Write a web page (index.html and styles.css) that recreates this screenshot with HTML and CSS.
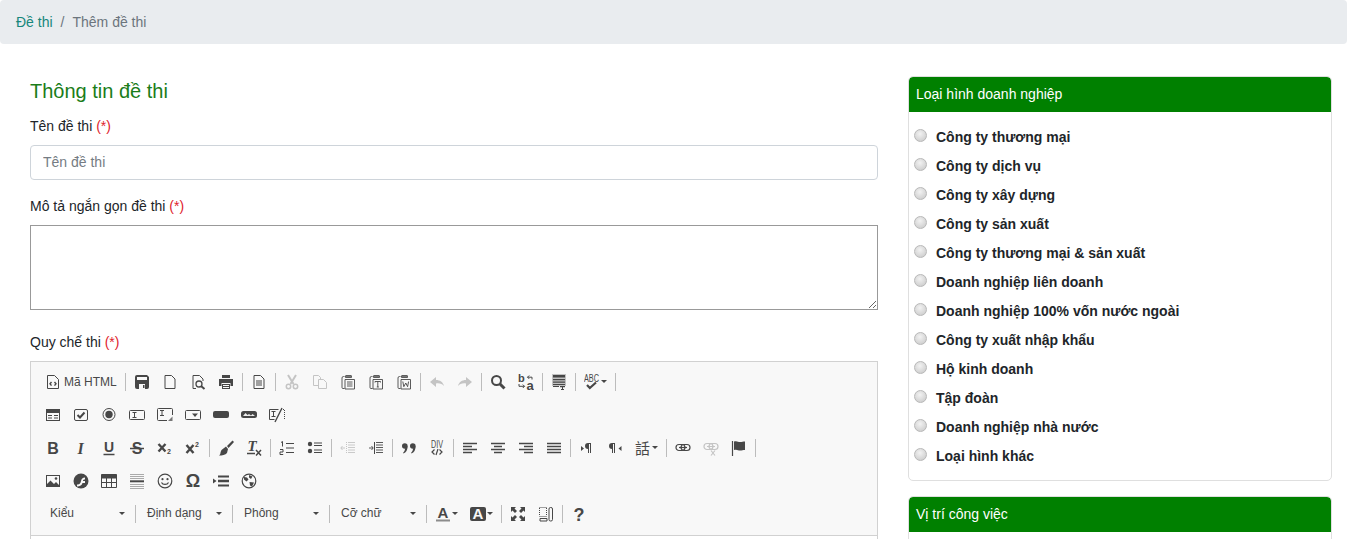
FILE: index.html
```html
<!DOCTYPE html>
<html lang="vi">
<head>
<meta charset="utf-8">
<title>Thêm đề thi</title>
<link rel="stylesheet" href="styles.css">
</head>
<body>
<svg class="sprite" aria-hidden="true">
  <symbol id="source" viewBox="0 0 16 16"><path d="M2.500 1.500h7l4 4v9h-11z" fill="none" stroke="currentColor"/><path d="M6.500 8L5 9.800l1.500 1.800M9.500 8L11 9.800l-1.500 1.800" fill="none" stroke="currentColor" stroke-width="1.400"/></symbol>
  <symbol id="save" viewBox="0 0 16 16"><path d="M1 3a2 2 0 012-2h10l2 2v10a2 2 0 01-2 2H3a2 2 0 01-2-2z" fill="currentColor"/><path d="M3 3h10v3H3zM5 10h6v5H5z" fill="#f8f8f8"/><path d="M9 11h1.500v3H9z" fill="currentColor"/></symbol>
  <symbol id="new" viewBox="0 0 16 16"><path d="M3 1.500h6.500l3.500 3.500v9.500H3z" fill="none" stroke="currentColor"/></symbol>
  <symbol id="preview" viewBox="0 0 16 16"><path d="M6 14.500H3v-13h6.500L13 5v2" fill="none" stroke="currentColor"/><circle cx="9" cy="10" r="3" fill="none" stroke="currentColor" stroke-width="1.300"/><path d="M11 12l3.500 3" stroke="currentColor" stroke-width="2"/></symbol>
  <symbol id="print" viewBox="0 0 16 16"><path d="M4 1h8v3H4z" fill="currentColor"/><path d="M1 5h14v7h-2.500V9h-9v3H1z" fill="currentColor"/><path d="M4 10h8v5H4z" fill="currentColor"/><path d="M5 11h6v1H5zM5 13h6v1H5z" fill="#f8f8f8"/></symbol>
  <symbol id="templates" viewBox="0 0 16 16"><path d="M3 1.500h6.500l3.500 3.500v9.500H3z" fill="none" stroke="currentColor"/><path d="M5 7h6M5 9h6M5 11h6" stroke="currentColor"/></symbol>
  <symbol id="cut" viewBox="0 0 16 16"><path d="M4 1l5.500 9M12 1L6.500 10" stroke="currentColor" stroke-width="2" fill="none"/><circle cx="4.500" cy="12.500" r="2.200" fill="none" stroke="currentColor" stroke-width="1.500"/><circle cx="11.500" cy="12.500" r="2.200" fill="none" stroke="currentColor" stroke-width="1.500"/></symbol>
  <symbol id="copy" viewBox="0 0 16 16"><path d="M6.500 11.500h-5v-10h5l2 2v2M6.500 5.500h5l3 3v6h-8z" fill="none" stroke="currentColor"/></symbol>
  <symbol id="paste" viewBox="0 0 16 16"><path d="M4.500 2.500h-1a1.500 1.500 0 00-1.500 1.500v9.500a1 1 0 001 1h1.500" fill="none" stroke="currentColor" stroke-width=".9"/><path d="M5.500 3.500V2a.5.5 0 01.5-.5h5a.5.5 0 01.5.5v1.500z" fill="#777" stroke="currentColor" stroke-width=".8"/><path d="M5 5.500h9.500v9.500H5z" fill="none" stroke="currentColor" stroke-width=".9"/><path d="M7 8h5.500M7 10h5.500M7 12h5.500" stroke="currentColor" stroke-width=".9"/></symbol>
  <symbol id="pastetext" viewBox="0 0 16 16"><path d="M4.500 2.500h-1a1.500 1.500 0 00-1.500 1.500v9.500a1 1 0 001 1h1.500" fill="none" stroke="currentColor" stroke-width=".9"/><path d="M5.500 3.500V2a.5.5 0 01.5-.5h5a.5.5 0 01.5.5v1.500z" fill="#777" stroke="currentColor" stroke-width=".8"/><path d="M5 5.500h9.500v9.500H5z" fill="none" stroke="currentColor" stroke-width=".9"/><path d="M7 8.500V7.500h5.500v1M9.800 7.500V13M8.800 13h2" fill="none" stroke="currentColor" stroke-width=".9"/></symbol>
  <symbol id="pasteword" viewBox="0 0 16 16"><path d="M4.500 2.500h-1a1.500 1.500 0 00-1.500 1.500v9.500a1 1 0 001 1h1.500" fill="none" stroke="currentColor" stroke-width=".9"/><path d="M5.500 3.500V2a.5.5 0 01.5-.5h5a.5.5 0 01.5.5v1.500z" fill="#777" stroke="currentColor" stroke-width=".8"/><path d="M5 5.500h9.500v9.500H5z" fill="none" stroke="currentColor" stroke-width=".9"/><path d="M6.800 7.500l1 5.200L9.800 9l1.800 3.700 1-5.200" fill="none" stroke="currentColor" stroke-width=".9"/></symbol>
  <symbol id="undo" viewBox="0 0 16 16"><path d="M1 8l6-5v3c4 0 7 2 8 6-2-2-4-3-8-2.500V13z" fill="currentColor"/></symbol>
  <symbol id="redo" viewBox="0 0 16 16"><path d="M15 8L9 3v3C5 6 2 8 1 12c2-2 4-3 8-2.500V13z" fill="currentColor"/></symbol>
  <symbol id="find" viewBox="0 0 16 16"><circle cx="6.500" cy="6.500" r="4.500" fill="none" stroke="currentColor" stroke-width="2"/><path d="M10 10l4.500 4.500" stroke="currentColor" stroke-width="3"/></symbol>
  <symbol id="replace" viewBox="0 0 16 16"><text x="0" y="8" class="gl gb11">b</text><text x="8.500" y="15.500" class="gl gb13">a</text><path d="M14 5.500V3.200H9.500M11.200 1.500L9.500 3.200l1.700 1.700" fill="none" stroke="currentColor"/><path d="M1 10v2.300h5.500M4.800 10.600l1.700 1.700-1.700 1.700" fill="none" stroke="currentColor"/></symbol>
  <symbol id="selectall" viewBox="0 0 16 16"><path d="M1 0h14v12H1z" fill="#c2c2c2"/><path d="M2 1h12v2.500H2zM2 5h12v1.200H2zM2 7.500h12v1.200H2zM2 10h12v1H2zM2 12h6v1H2z" fill="currentColor"/><path d="M9 12h5v1.200h-2V15h1v1h-3v-1h1v-1.800H9z" fill="currentColor"/></symbol>
  <symbol id="spell" viewBox="0 0 16 16"><text x="0" y="8" class="gl gs10" textLength="15" lengthAdjust="spacingAndGlyphs">ABC</text><path d="M3 11l2.800 3L12 8.500" fill="none" stroke="currentColor" stroke-width="2.200"/></symbol>
  <symbol id="form" viewBox="0 0 16 16"><path d="M1 2h14v12H1z" fill="currentColor"/><path d="M2 6h12v7H2z" fill="#f8f8f8"/><path d="M3 8h4v1H3zM3 10.500h4v1H3zM9 8h4v1H9zM9 10.500h4v1H9z" fill="currentColor"/></symbol>
  <symbol id="checkbox" viewBox="0 0 16 16"><rect x="1.500" y="2.500" width="13" height="11" rx="1.500" fill="none" stroke="currentColor"/><path d="M4.500 8l2.500 2.500 4.500-5" fill="none" stroke="currentColor" stroke-width="2"/></symbol>
  <symbol id="radio" viewBox="0 0 16 16"><circle cx="8" cy="7.500" r="6" fill="none" stroke="currentColor"/><circle cx="8" cy="7.500" r="3.700" fill="currentColor"/></symbol>
  <symbol id="textfield" viewBox="0 0 16 16"><rect x=".5" y="3.500" width="15" height="9" rx="1" fill="none" stroke="currentColor"/><path d="M3.500 5.500h4M5.500 5.500v5M3.500 10.500h4" fill="none" stroke="currentColor"/></symbol>
  <symbol id="textarea" viewBox="0 0 16 16"><path d="M10 13.500H1.500a1 1 0 01-1-1v-10a1 1 0 011-1h13a1 1 0 011 1V8" fill="none" stroke="currentColor"/><path d="M3 3.500h4M5 3.500v5M3 8.500h4" fill="none" stroke="currentColor"/><path d="M15.500 9.500v4.500H11z" fill="#777"/></symbol>
  <symbol id="select" viewBox="0 0 16 16"><rect x=".5" y="3.500" width="15" height="9" rx="1" fill="none" stroke="currentColor"/><path d="M7 6.500h6L10 10z" fill="currentColor"/></symbol>
  <symbol id="button" viewBox="0 0 16 16"><rect y="4" width="16" height="7" rx="2" fill="currentColor"/></symbol>
  <symbol id="imagebutton" viewBox="0 0 16 16"><rect y="4" width="16" height="7" rx="2.500" fill="currentColor"/><path d="M2 9l2.500-3 2 2 1.500-1 2 1.500 1.500-1.500L14 9z" fill="#eee"/></symbol>
  <symbol id="hiddenfield" viewBox="0 0 16 16"><path d="M.5 2.500h9M.5 2.500v10h5" fill="none" stroke="currentColor"/><path d="M2.500 4.500h4M4.500 4.500v5M2.500 9.500h4" fill="none" stroke="currentColor"/><path d="M6 15L13 1" stroke="currentColor" stroke-width="1.400"/><path d="M12 2.500h3.500M15.500 3v9" stroke="currentColor" stroke-dasharray="1 1" fill="none"/></symbol>
  <symbol id="bold" viewBox="0 0 16 16"><text x="8" y="13.500" class="gl gb16 mid">B</text></symbol>
  <symbol id="italic" viewBox="0 0 16 16"><text x="7.500" y="13.500" class="gl gi16 mid">I</text></symbol>
  <symbol id="underline" viewBox="0 0 16 16"><text x="8" y="12" class="gl gb14 mid">U</text><path d="M2.500 14.500h11" stroke="currentColor" stroke-width="1.500"/></symbol>
  <symbol id="strike" viewBox="0 0 16 16"><text x="8" y="13.500" class="gl gb16 mid">S</text><path d="M1 8.500h14" stroke="currentColor" stroke-width="1.500"/></symbol>
  <symbol id="sub" viewBox="0 0 16 16"><path d="M1.500 4l7 7.500M8.500 4l-7 7.500" stroke="currentColor" stroke-width="2.400"/><text x="10" y="14" class="gl gb7">2</text></symbol>
  <symbol id="sup" viewBox="0 0 16 16"><path d="M1.500 5l7 8M8.500 5l-7 8" stroke="currentColor" stroke-width="2.400"/><text x="10" y="7" class="gl gb7">2</text></symbol>
  <symbol id="brush" viewBox="0 0 16 16"><path d="M9 6l5.500-5.500 1.500 1.500L10.500 8z" fill="currentColor"/><path d="M8 6.500l2 2.500-1 4c-1.500 2-5 2.500-8 2.500 2-1 1-3 2.500-5.500z" fill="currentColor"/></symbol>
  <symbol id="removeformat" viewBox="0 0 16 16"><text x="1.500" y="11" class="gl gi15">T</text><path d="M1 13.500h8" stroke="currentColor" stroke-width="1.500"/><path d="M10 10l5 5.500M15 10l-5 5.500" stroke="currentColor" stroke-width="1.500"/></symbol>
  <symbol id="ol" viewBox="0 0 16 16"><path d="M7 3.500h8M7 8h8M7 12.500h8" stroke="currentColor" stroke-width="1.200"/><path d="M2 2.500l1.500-1v5M1 9.500h3v2.500H1v2.500h3.200" fill="none" stroke="currentColor"/></symbol>
  <symbol id="ul" viewBox="0 0 16 16"><circle cx="3" cy="4" r="2.200" fill="currentColor"/><circle cx="3" cy="11" r="2.200" fill="currentColor"/><path d="M7 3h8M7 5.500h8M7 10h8M7 12.500h8" stroke="currentColor" stroke-width="1.100"/></symbol>
  <symbol id="outdent" viewBox="0 0 16 16"><path d="M8 2.500h7M8 5h7M8 7.500h7M8 10h7M8 12.500h7" stroke="currentColor" stroke-width=".9"/><path d="M1 8h4M2.500 6L.8 8l1.700 2" stroke="currentColor" fill="none" stroke-width=".9"/><path d="M6.500 2v12" stroke="currentColor" stroke-dasharray="1 1"/></symbol>
  <symbol id="indent" viewBox="0 0 16 16"><path d="M8 2.500h7M8 5h7M8 7.500h7M8 10h7M8 12.500h7" stroke="currentColor" stroke-width=".9"/><path d="M1 8h4M3.500 6L5.200 8l-1.700 2" stroke="currentColor" fill="none" stroke-width=".9"/><path d="M6.500 2v12" stroke="currentColor"/></symbol>
  <symbol id="quote" viewBox="0 0 16 16"><circle cx="3.800" cy="6" r="2.800" fill="currentColor"/><path d="M6.600 6c0 4-1.500 6.500-4.100 7.500l-.4-.8C3.500 11.500 4 10 4 8.500z" fill="currentColor"/><circle cx="11.800" cy="6" r="2.800" fill="currentColor"/><path d="M14.600 6c0 4-1.500 6.500-4.100 7.500l-.4-.8c1.400-1.200 1.900-2.700 1.900-4.200z" fill="currentColor"/></symbol>
  <symbol id="div" viewBox="0 0 16 16"><text x="2" y="7.500" class="gl gs10" textLength="12" lengthAdjust="spacingAndGlyphs">DIV</text><path d="M5.500 9.500L3 12l2.500 2.500M10.500 9.500L13 12l-2.500 2.500M9 9l-2 6" fill="none" stroke="currentColor" stroke-width="1.200"/></symbol>
  <symbol id="left" viewBox="0 0 16 16"><path d="M1 3h14M1 6h9M1 9h14M1 12h9" stroke="currentColor" stroke-width="1.700" transform="translate(0 .5)"/></symbol>
  <symbol id="center" viewBox="0 0 16 16"><path d="M1 3h14M4 6h8M1 9h14M4 12h8" stroke="currentColor" stroke-width="1.700" transform="translate(0 .5)"/></symbol>
  <symbol id="right" viewBox="0 0 16 16"><path d="M1 3h14M6 6h9M1 9h14M6 12h9" stroke="currentColor" stroke-width="1.700" transform="translate(0 .5)"/></symbol>
  <symbol id="justify" viewBox="0 0 16 16"><path d="M1 3h14M1 6h14M1 9h14M1 12h14" stroke="currentColor" stroke-width="1.700" transform="translate(0 .5)"/></symbol>
  <symbol id="ltr" viewBox="0 0 16 16"><path d="M2 6l3 2.500-3 2.500z" fill="currentColor"/><path d="M9 3a3 3 0 000 6v4h1V4h1v9h1V3z" fill="currentColor"/></symbol>
  <symbol id="rtl" viewBox="0 0 16 16"><path d="M14.500 6l-3 2.500 3 2.500z" fill="currentColor"/><path d="M5 3a3 3 0 000 6v4h1V4h1v9h1V3z" fill="currentColor"/></symbol>
  <symbol id="language" viewBox="0 0 16 16"><text x="0" y="14" class="gl gcjk">話</text></symbol>
  <symbol id="link" viewBox="0 0 16 16"><rect x="1" y="4.500" width="9" height="6" rx="3" fill="none" stroke="currentColor" stroke-width="1.200"/><rect x="6" y="4.500" width="9" height="6" rx="3" fill="none" stroke="currentColor" stroke-width="1.200"/><path d="M4 7.500h8" stroke="currentColor" stroke-width="1.200"/></symbol>
  <symbol id="unlink" viewBox="0 0 16 16"><rect x="1" y="3.500" width="9" height="6" rx="3" fill="none" stroke="currentColor" stroke-width="1.200"/><rect x="6" y="3.500" width="9" height="6" rx="3" fill="none" stroke="currentColor" stroke-width="1.200"/><path d="M4 6.500h8M8 10.500l4 5M12 10.500l-4 5" stroke="currentColor" stroke-width="1.200"/></symbol>
  <symbol id="anchor" viewBox="0 0 16 16"><path d="M1.500 1v15" stroke="currentColor" stroke-width="1.200"/><path d="M3 1.500c3-1 4 .5 6 .5s3-.5 5-.5v8.500c-2 0-3 .5-5 .5s-3-1.500-6-.5z" fill="currentColor"/></symbol>
  <symbol id="image" viewBox="0 0 16 16"><path d="M1 2h14v12H1z" fill="currentColor"/><path d="M2 3h12v10H2z" fill="#f8f8f8"/><path d="M2 13v-2l3.500-3.500L9 11l2-2 3 3v1z" fill="currentColor"/><circle cx="11" cy="5.500" r="1.300" fill="currentColor"/></symbol>
  <symbol id="flash" viewBox="0 0 16 16"><circle cx="8" cy="8" r="7.500" fill="currentColor"/><path d="M4 11.500c3 0 3.500-1.500 4-3.500s1.500-3.500 4-3.500V6.500c-1.500 0-2 .5-2 1.500h2v2H9.500C9 12 7 13.500 4 13.500z" fill="#f8f8f8"/></symbol>
  <symbol id="table" viewBox="0 0 16 16"><path d="M.5 1.500h15v13H.5z" fill="#f8f8f8" stroke="currentColor"/><path d="M.5 1.500h15v4H.5z" fill="currentColor"/><path d="M5.500 5v9M10.500 5v9M1 9.500h14" stroke="currentColor"/></symbol>
  <symbol id="hr" viewBox="0 0 16 16"><path d="M1 1.500h14M1 3.500h14M1 5.500h14M1 11.500h14M1 13.500h14M1 15.500h14" stroke="#a0a0a0" stroke-width=".9"/><path d="M1 8.300h14" stroke="currentColor" stroke-width="2"/></symbol>
  <symbol id="smiley" viewBox="0 0 16 16"><circle cx="8" cy="8" r="6.800" fill="none" stroke="currentColor" stroke-width="1.200"/><circle cx="5.500" cy="6.200" r="1.100" fill="currentColor"/><circle cx="10.500" cy="6.200" r="1.100" fill="currentColor"/><path d="M4.500 9.500c1.200 2.500 5.800 2.500 7 0" fill="none" stroke="currentColor" stroke-width="1.200"/></symbol>
  <symbol id="specialchar" viewBox="0 0 16 16"><text x="8" y="14" class="gl gb18 mid">Ω</text></symbol>
  <symbol id="pagebreak" viewBox="0 0 16 16"><path d="M0 5.500l3.500 2.500L0 10.500z" fill="currentColor"/><path d="M5 3.500h11M5 12.500h11" stroke="currentColor" stroke-width="1.800"/><path d="M5 8h11" stroke="currentColor" stroke-width="2.500"/></symbol>
  <symbol id="iframe" viewBox="0 0 16 16"><circle cx="8" cy="8" r="6.800" fill="none" stroke="currentColor" stroke-width="1.200"/><path d="M3 4l3 .5 1.500 2-2 2L3 6.500zM8 2l3.500 1.500L10 6 8 4.500zM8.500 9l4.500 .500L11 13.500l-2-1z" fill="currentColor"/></symbol>
  <symbol id="textcolor" viewBox="0 0 16 16"><text x="8" y="12" class="gl gb15 mid">A</text><path d="M1 14.500h14" stroke="#8c8c8c" stroke-width="2"/></symbol>
  <symbol id="bgcolor" viewBox="0 0 16 16"><rect y="1" width="16" height="14" rx="2" fill="currentColor"/><text x="8" y="13" class="gl gb15 mid inv">A</text></symbol>
  <symbol id="maximize" viewBox="0 0 16 16"><path d="M1 1h5L4.500 2.500 7 5 5 7 2.500 4.500 1 6zM15 1v5l-1.500-1.500L11 7 9 5l2.500-2.500L10 1zM1 15v-5l1.500 1.500L5 9l2 2-2.500 2.500L6 15zM15 15h-5l1.500-1.500L9 11l2-2 2.500 2.500L15 10z" fill="currentColor"/></symbol>
  <symbol id="blocks" viewBox="0 0 16 16"><path d="M1.500 2v8M8.500 2v8M1.500 1.500h7M1.500 10.500h7" stroke="currentColor" stroke-dasharray="1 1" fill="none"/><path d="M2 12.500h7v2.500H2z" fill="none" stroke="currentColor"/><rect x="11" y="1.500" width="3.500" height="13.500" rx="1.500" fill="none" stroke="currentColor"/></symbol>
  <symbol id="help" viewBox="0 0 16 16"><text x="8" y="15" class="gl gb18 mid">?</text></symbol>
</svg>

<nav class="breadcrumb"><a class="crumb-link" href="#">Đề thi</a><span class="crumb-sep">/</span><span class="crumb-current">Thêm đề thi</span></nav>

<main class="page">
  <section class="col-main">
    <h2 class="section-title">Thông tin đề thi</h2>
    <label class="field-label">Tên đề thi <span class="req">(*)</span></label>
    <input class="text-input" type="text" placeholder="Tên đề thi">
    <label class="field-label">Mô tả ngắn gọn đề thi <span class="req">(*)</span></label>
    <textarea class="text-area"></textarea>
    <label class="field-label last">Quy chế thi <span class="req">(*)</span></label>

    <div class="editor">
      <div class="toolbar">
        <div class="row">
          <a class="btn"><svg class="ic"><use href="#source"/></svg><span class="btn-label">Mã HTML</span></a><i class="sep"></i>
          <a class="btn"><svg class="ic"><use href="#save"/></svg></a>
          <a class="btn"><svg class="ic"><use href="#new"/></svg></a>
          <a class="btn"><svg class="ic"><use href="#preview"/></svg></a>
          <a class="btn"><svg class="ic"><use href="#print"/></svg></a><i class="sep"></i>
          <a class="btn"><svg class="ic"><use href="#templates"/></svg></a><i class="sep"></i>
          <a class="btn off"><svg class="ic"><use href="#cut"/></svg></a>
          <a class="btn off"><svg class="ic"><use href="#copy"/></svg></a>
          <a class="btn"><svg class="ic"><use href="#paste"/></svg></a>
          <a class="btn"><svg class="ic"><use href="#pastetext"/></svg></a>
          <a class="btn"><svg class="ic"><use href="#pasteword"/></svg></a><i class="sep"></i>
          <a class="btn off"><svg class="ic"><use href="#undo"/></svg></a>
          <a class="btn off"><svg class="ic"><use href="#redo"/></svg></a><i class="sep"></i>
          <a class="btn"><svg class="ic"><use href="#find"/></svg></a>
          <a class="btn"><svg class="ic"><use href="#replace"/></svg></a><i class="sep"></i>
          <a class="btn"><svg class="ic"><use href="#selectall"/></svg></a><i class="sep"></i>
          <a class="btn has-arrow"><svg class="ic"><use href="#spell"/></svg><b class="arrow"></b></a><i class="sep"></i>
        </div>
        <div class="row">
          <a class="btn"><svg class="ic"><use href="#form"/></svg></a>
          <a class="btn"><svg class="ic"><use href="#checkbox"/></svg></a>
          <a class="btn"><svg class="ic"><use href="#radio"/></svg></a>
          <a class="btn"><svg class="ic"><use href="#textfield"/></svg></a>
          <a class="btn"><svg class="ic"><use href="#textarea"/></svg></a>
          <a class="btn"><svg class="ic"><use href="#select"/></svg></a>
          <a class="btn"><svg class="ic"><use href="#button"/></svg></a>
          <a class="btn"><svg class="ic"><use href="#imagebutton"/></svg></a>
          <a class="btn"><svg class="ic"><use href="#hiddenfield"/></svg></a>
        </div>
        <div class="row">
          <a class="btn"><svg class="ic"><use href="#bold"/></svg></a>
          <a class="btn"><svg class="ic"><use href="#italic"/></svg></a>
          <a class="btn"><svg class="ic"><use href="#underline"/></svg></a>
          <a class="btn"><svg class="ic"><use href="#strike"/></svg></a>
          <a class="btn"><svg class="ic"><use href="#sub"/></svg></a>
          <a class="btn"><svg class="ic"><use href="#sup"/></svg></a><i class="sep"></i>
          <a class="btn"><svg class="ic"><use href="#brush"/></svg></a>
          <a class="btn"><svg class="ic"><use href="#removeformat"/></svg></a><i class="sep"></i>
          <a class="btn"><svg class="ic"><use href="#ol"/></svg></a>
          <a class="btn"><svg class="ic"><use href="#ul"/></svg></a><i class="sep"></i>
          <a class="btn off"><svg class="ic"><use href="#outdent"/></svg></a>
          <a class="btn"><svg class="ic"><use href="#indent"/></svg></a><i class="sep"></i>
          <a class="btn"><svg class="ic"><use href="#quote"/></svg></a>
          <a class="btn"><svg class="ic"><use href="#div"/></svg></a><i class="sep"></i>
          <a class="btn"><svg class="ic"><use href="#left"/></svg></a>
          <a class="btn"><svg class="ic"><use href="#center"/></svg></a>
          <a class="btn"><svg class="ic"><use href="#right"/></svg></a>
          <a class="btn"><svg class="ic"><use href="#justify"/></svg></a><i class="sep"></i>
          <a class="btn"><svg class="ic"><use href="#ltr"/></svg></a>
          <a class="btn"><svg class="ic"><use href="#rtl"/></svg></a>
          <a class="btn has-arrow"><svg class="ic"><use href="#language"/></svg><b class="arrow"></b></a><i class="sep"></i>
          <a class="btn"><svg class="ic"><use href="#link"/></svg></a>
          <a class="btn off"><svg class="ic"><use href="#unlink"/></svg></a>
          <a class="btn"><svg class="ic"><use href="#anchor"/></svg></a><i class="sep"></i>
        </div>
        <div class="row">
          <a class="btn"><svg class="ic"><use href="#image"/></svg></a>
          <a class="btn"><svg class="ic"><use href="#flash"/></svg></a>
          <a class="btn"><svg class="ic"><use href="#table"/></svg></a>
          <a class="btn"><svg class="ic"><use href="#hr"/></svg></a>
          <a class="btn"><svg class="ic"><use href="#smiley"/></svg></a>
          <a class="btn"><svg class="ic"><use href="#specialchar"/></svg></a>
          <a class="btn"><svg class="ic"><use href="#pagebreak"/></svg></a>
          <a class="btn"><svg class="ic"><use href="#iframe"/></svg></a>
        </div>
        <div class="row">
          <a class="combo first"><span>Kiểu</span><b class="arrow"></b></a><i class="sep"></i>
          <a class="combo"><span>Định dạng</span><b class="arrow"></b></a><i class="sep"></i>
          <a class="combo"><span>Phông</span><b class="arrow"></b></a><i class="sep"></i>
          <a class="combo"><span>Cỡ chữ</span><b class="arrow"></b></a><i class="sep"></i>
          <a class="btn has-arrow"><svg class="ic"><use href="#textcolor"/></svg><b class="arrow"></b></a>
          <a class="btn has-arrow"><svg class="ic"><use href="#bgcolor"/></svg><b class="arrow"></b></a><i class="sep"></i>
          <a class="btn"><svg class="ic"><use href="#maximize"/></svg></a>
          <a class="btn"><svg class="ic"><use href="#blocks"/></svg></a><i class="sep"></i>
          <a class="btn"><svg class="ic"><use href="#help"/></svg></a>
        </div>
      </div>
      <div class="editor-body"></div>
    </div>
  </section>

  <aside class="col-side">
    <div class="panel">
      <h3 class="panel-head">Loại hình doanh nghiệp</h3>
      <div class="panel-body">
        <label class="opt"><input type="radio" name="lh"><span>Công ty thương mại</span></label>
        <label class="opt"><input type="radio" name="lh"><span>Công ty dịch vụ</span></label>
        <label class="opt"><input type="radio" name="lh"><span>Công ty xây dựng</span></label>
        <label class="opt"><input type="radio" name="lh"><span>Công ty sản xuất</span></label>
        <label class="opt"><input type="radio" name="lh"><span>Công ty thương mại &amp; sản xuất</span></label>
        <label class="opt"><input type="radio" name="lh"><span>Doanh nghiệp liên doanh</span></label>
        <label class="opt"><input type="radio" name="lh"><span>Doanh nghiệp 100% vốn nước ngoài</span></label>
        <label class="opt"><input type="radio" name="lh"><span>Công ty xuất nhập khẩu</span></label>
        <label class="opt"><input type="radio" name="lh"><span>Hộ kinh doanh</span></label>
        <label class="opt"><input type="radio" name="lh"><span>Tập đoàn</span></label>
        <label class="opt"><input type="radio" name="lh"><span>Doanh nghiệp nhà nước</span></label>
        <label class="opt"><input type="radio" name="lh"><span>Loại hình khác</span></label>
      </div>
    </div>
    <div class="panel">
      <h3 class="panel-head">Vị trí công việc</h3>
      <div class="panel-body"></div>
    </div>
  </aside>
</main>
</body>
</html>
```

FILE: styles.css
```css
* { box-sizing: border-box; }
html, body { margin: 0; height: 100%; overflow: hidden; }
body {
  font-family: "Liberation Sans", Arial, sans-serif;
  font-size: 14px;
  line-height: 21px;
  color: #212529;
  background: #fff;
}
.sprite { display: none; }

.breadcrumb {
  display: flex;
  align-items: center;
  height: 44px;
  padding: 0 16px;
  background: #e9ecef;
  border-radius: 4px;
}
.crumb-link { color: #17877b; text-decoration: none; }
.crumb-sep { color: #6c757d; padding: 0 8px; }
.crumb-current { color: #6c757d; }

.page {
  display: flex;
  gap: 30px;
  padding: 32px 15px 0 30px;
}
.col-main { width: 848px; flex: none; }
.col-side { width: 424px; flex: none; }

.section-title {
  margin: 0 0 10px;
  font-size: 20px;
  line-height: 30px;
  font-weight: 400;
  color: #1a7d1a;
}
.field-label { display: block; margin-bottom: 8px; }
.field-label.last { margin-top: 22px; }
.req { color: #e0232e; }

.text-input {
  display: block;
  width: 100%;
  height: 35px;
  margin-bottom: 16px;
  padding: 0 12px 2px;
  border: 1px solid #ced4da;
  border-radius: 4px;
  font: inherit;
  color: #495057;
}
.text-input::placeholder { color: #757c83; opacity: 1; }
.text-area {
  display: block;
  width: 100%;
  height: 85px;
  padding: 2px;
  border: 1px solid #999;
  font: inherit;
}

.editor { border: 1px solid #d1d1d1; border-bottom: 0; background: #fff; }
.toolbar {
  padding: 3px 8px 5px;
  background: #f8f8f8;
  border-bottom: 1px solid #d1d1d1;
}
.row { display: flex; align-items: center; height: 33px; color: #474747; }
.btn {
  display: flex;
  align-items: center;
  flex: none;
  padding: 0 6px;
  height: 24px;
}
.btn.off { color: #c4c4c4; }
.btn.has-arrow { padding-right: 0; width: 35px; }
.has-arrow .arrow { margin-left: 1px; }
.ic { display: block; width: 16px; height: 16px; flex: none; }
.btn-label { margin-left: 3px; font-size: 12px; line-height: 16px; color: #484848; }
.sep { display: block; flex: none; width: 1px; height: 18px; margin: 0 2px; background: #bcbcbc; }
.arrow {
  display: block;
  flex: none;
  margin-left: 3px;
  width: 0;
  height: 0;
  border: 3px solid transparent;
  border-top-color: #474747;
  border-bottom: 0;
}
.combo {
  display: flex;
  align-items: center;
  justify-content: space-between;
  flex: none;
  width: 92px;
  height: 24px;
  padding: 0 8px 0 9px;
  font-size: 12px;
  color: #484848;
}
.combo.first { width: 94px; padding-left: 11px; }
.editor-body { height: 300px; }

.gl { fill: currentColor; font-family: "Liberation Sans", Arial, sans-serif; }
.mid { text-anchor: middle; }
.inv { fill: #f8f8f8; }
.gb7 { font-size: 7px; font-weight: 700; }
.gb11 { font-size: 11px; font-weight: 700; }
.gb13 { font-size: 13px; font-weight: 700; }
.gb14 { font-size: 14px; font-weight: 700; }
.gb15 { font-size: 15px; font-weight: 700; }
.gb16 { font-size: 16px; font-weight: 700; }
.gb18 { font-size: 18px; font-weight: 700; }
.gi15 { font-size: 15px; font-weight: 700; font-style: italic; font-family: "Liberation Serif", serif; }
.gi16 { font-size: 16px; font-weight: 700; font-style: italic; font-family: "Liberation Serif", serif; }
.gs10 { font-size: 10px; }
.gcjk { font-size: 15px; font-family: "Noto Sans CJK TC", sans-serif; }

.panel {
  margin-bottom: 15px;
  border: 1px solid #dfdfdf;
  border-radius: 5px;
  overflow: hidden;
}
.panel-head {
  margin: 0;
  height: 35px;
  padding: 0 7px;
  background: #008000;
  color: #fff;
  font-size: 14px;
  font-weight: 400;
  line-height: 35px;
  border-radius: 4px 4px 0 0;
}
.panel-body { padding: 11px 5px 9px; }
.opt {
  display: flex;
  align-items: center;
  height: 29px;
  font-weight: 700;
}
.opt input {
  appearance: none;
  width: 13px;
  height: 13px;
  margin: 0 9px 4px 0;
  flex: none;
  border: 1px solid #b8b8b8;
  border-radius: 50%;
  background: radial-gradient(circle at 45% 35%, #f2f2f2, #cfcfcf 80%);
}
```
